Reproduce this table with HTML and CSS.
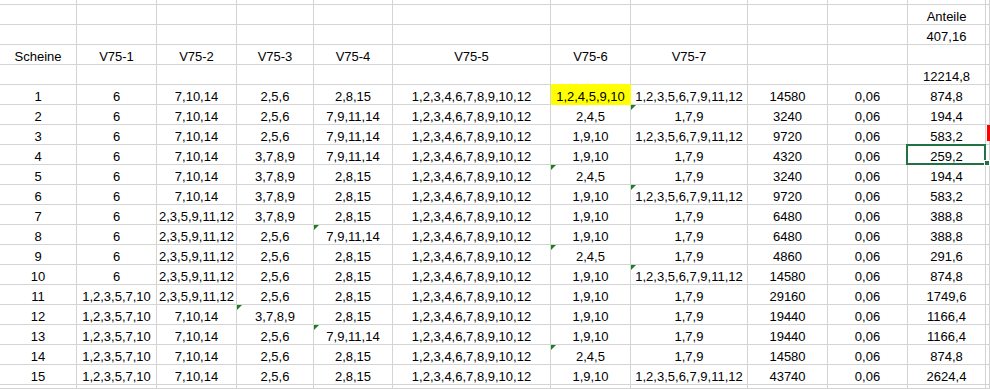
FILE: index.html
```html
<!DOCTYPE html>
<html lang="de">
<head>
<meta charset="utf-8">
<title>Scheine</title>
<link rel="stylesheet" href="styles.css">
</head>
<body>
<div class="sheet">
<div></div><div></div><div></div><div></div><div></div><div></div><div></div><div></div><div></div><div></div><div></div><div></div>
<div></div><div></div><div></div><div></div><div></div><div></div><div></div><div></div><div></div><div></div><div>Anteile</div><div></div>
<div></div><div></div><div></div><div></div><div></div><div></div><div></div><div></div><div></div><div></div><div>407,16</div><div></div>
<div>Scheine</div><div>V75-1</div><div>V75-2</div><div>V75-3</div><div>V75-4</div><div>V75-5</div><div>V75-6</div><div>V75-7</div><div></div><div></div><div></div><div></div>
<div></div><div></div><div></div><div></div><div></div><div></div><div></div><div></div><div></div><div></div><div>12214,8</div><div></div>
<div>1</div><div>6</div><div>7,10,14</div><div>2,5,6</div><div>2,8,15</div><div>1,2,3,4,6,7,8,9,10,12</div><div class="yel">1,2,4,5,9,10</div><div>1,2,3,5,6,7,9,11,12</div><div>14580</div><div>0,06</div><div>874,8</div><div></div>
<div>2</div><div>6</div><div>7,10,14</div><div>2,5,6</div><div>7,9,11,14</div><div>1,2,3,4,6,7,8,9,10,12</div><div>2,4,5</div><div class="tri">1,7,9</div><div>3240</div><div>0,06</div><div>194,4</div><div></div>
<div>3</div><div>6</div><div>7,10,14</div><div>2,5,6</div><div>7,9,11,14</div><div>1,2,3,4,6,7,8,9,10,12</div><div>1,9,10</div><div>1,2,3,5,6,7,9,11,12</div><div>9720</div><div>0,06</div><div>583,2</div><div class="red"></div>
<div>4</div><div>6</div><div>7,10,14</div><div>3,7,8,9</div><div>7,9,11,14</div><div>1,2,3,4,6,7,8,9,10,12</div><div>1,9,10</div><div>1,7,9</div><div>4320</div><div>0,06</div><div class="sel">259,2<span class="handle"></span></div><div></div>
<div>5</div><div>6</div><div>7,10,14</div><div>3,7,8,9</div><div>2,8,15</div><div>1,2,3,4,6,7,8,9,10,12</div><div class="tri">2,4,5</div><div>1,7,9</div><div>3240</div><div>0,06</div><div>194,4</div><div></div>
<div>6</div><div>6</div><div>7,10,14</div><div>3,7,8,9</div><div>2,8,15</div><div>1,2,3,4,6,7,8,9,10,12</div><div>1,9,10</div><div class="tri">1,2,3,5,6,7,9,11,12</div><div>9720</div><div>0,06</div><div>583,2</div><div></div>
<div>7</div><div>6</div><div>2,3,5,9,11,12</div><div>3,7,8,9</div><div>2,8,15</div><div>1,2,3,4,6,7,8,9,10,12</div><div>1,9,10</div><div>1,7,9</div><div>6480</div><div>0,06</div><div>388,8</div><div></div>
<div>8</div><div>6</div><div>2,3,5,9,11,12</div><div>2,5,6</div><div class="tri">7,9,11,14</div><div>1,2,3,4,6,7,8,9,10,12</div><div>1,9,10</div><div>1,7,9</div><div>6480</div><div>0,06</div><div>388,8</div><div></div>
<div>9</div><div>6</div><div>2,3,5,9,11,12</div><div>2,5,6</div><div>2,8,15</div><div>1,2,3,4,6,7,8,9,10,12</div><div class="tri">2,4,5</div><div>1,7,9</div><div>4860</div><div>0,06</div><div>291,6</div><div></div>
<div>10</div><div>6</div><div>2,3,5,9,11,12</div><div>2,5,6</div><div>2,8,15</div><div>1,2,3,4,6,7,8,9,10,12</div><div>1,9,10</div><div class="tri">1,2,3,5,6,7,9,11,12</div><div>14580</div><div>0,06</div><div>874,8</div><div></div>
<div>11</div><div>1,2,3,5,7,10</div><div>2,3,5,9,11,12</div><div>2,5,6</div><div>2,8,15</div><div>1,2,3,4,6,7,8,9,10,12</div><div>1,9,10</div><div>1,7,9</div><div>29160</div><div>0,06</div><div>1749,6</div><div></div>
<div>12</div><div>1,2,3,5,7,10</div><div>7,10,14</div><div class="tri">3,7,8,9</div><div>2,8,15</div><div>1,2,3,4,6,7,8,9,10,12</div><div>1,9,10</div><div>1,7,9</div><div>19440</div><div>0,06</div><div>1166,4</div><div></div>
<div>13</div><div>1,2,3,5,7,10</div><div>7,10,14</div><div>2,5,6</div><div class="tri">7,9,11,14</div><div>1,2,3,4,6,7,8,9,10,12</div><div>1,9,10</div><div>1,7,9</div><div>19440</div><div>0,06</div><div>1166,4</div><div></div>
<div>14</div><div>1,2,3,5,7,10</div><div>7,10,14</div><div>2,5,6</div><div>2,8,15</div><div>1,2,3,4,6,7,8,9,10,12</div><div class="tri">2,4,5</div><div>1,7,9</div><div>14580</div><div>0,06</div><div>874,8</div><div></div>
<div>15</div><div>1,2,3,5,7,10</div><div>7,10,14</div><div>2,5,6</div><div>2,8,15</div><div>1,2,3,4,6,7,8,9,10,12</div><div>1,9,10</div><div>1,2,3,5,6,7,9,11,12</div><div>43740</div><div>0,06</div><div>2624,4</div><div></div>
<div></div><div></div><div></div><div></div><div></div><div></div><div></div><div></div><div></div><div></div><div></div><div></div>
</div>
</body>
</html>
```
FILE: styles.css
```css
html, body {
  margin: 0;
  padding: 0;
  background: #ffffff;
  overflow: hidden;
}

body {
  width: 990px;
  height: 389px;
  font-family: "Liberation Sans", Arial, sans-serif;
  font-size: 13px;
  color: #000000;
}

.sheet {
  display: grid;
  width: 990px;
  height: 389px;
  overflow: hidden;
  grid-template-columns: 77px 80px 80px 77px 79px 158px 80px 117px 80px 80px 78px 4px;
  grid-template-rows: 5px repeat(19, 20px) 4px;
}

.sheet > div {
  position: relative;
  box-sizing: border-box;
  border-right: 1px solid #d4d4d4;
  border-bottom: 1px solid #d4d4d4;
  padding-top: 2px;
  line-height: 19px;
  text-align: center;
  white-space: nowrap;
}

.sheet > .yel {
  background: #ffff00;
  border-right-color: #ffff00;
  border-bottom-color: #ffff00;
  box-shadow: 0 -1px 0 #ffff00;
}

.sheet > .tri::before {
  content: "";
  position: absolute;
  left: 0;
  top: 0;
  width: 0;
  height: 0;
  border-top: 5px solid #1e7d22;
  border-right: 5px solid transparent;
}

.sheet > .red::before {
  content: "";
  position: absolute;
  left: 1px;
  top: 0;
  width: 3px;
  height: 16px;
  background: #ff0000;
}

.sheet > .sel::after {
  content: "";
  position: absolute;
  left: -2px;
  top: -1px;
  right: -1px;
  bottom: -1px;
  border: 2px solid #217346;
  z-index: 2;
}

.handle {
  position: absolute;
  left: 76px;
  top: 15px;
  width: 4px;
  height: 4px;
  background: #217346;
  border: 1px solid #ffffff;
  z-index: 3;
}
```
